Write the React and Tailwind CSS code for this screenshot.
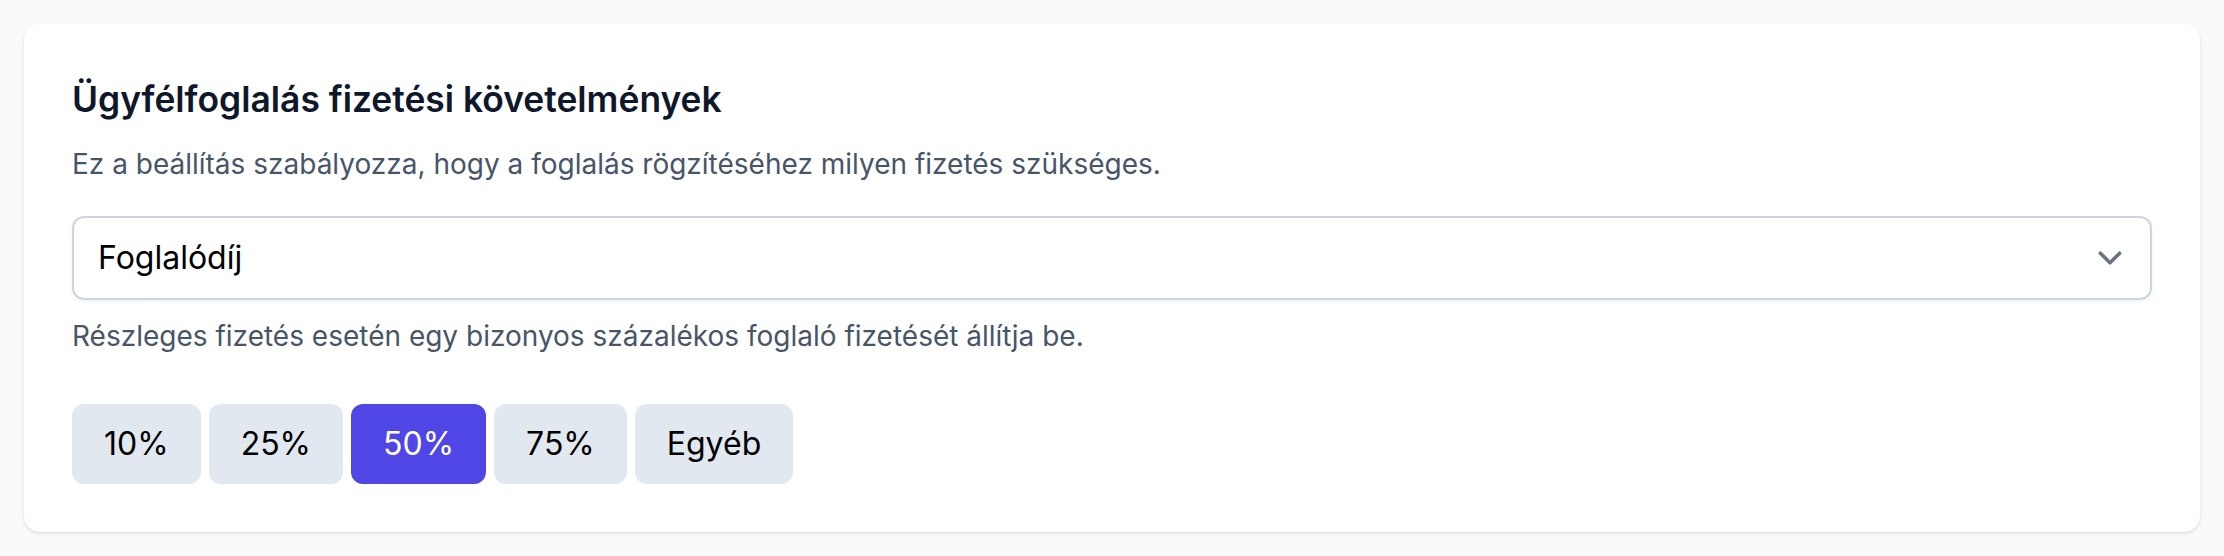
import React from "react";

function Chevron() {
  return (
    <svg className="pointer-events-none absolute right-[16px] top-1/2 -translate-y-1/2" width="48" height="48" viewBox="0 0 20 20" fill="none">
      <path d="M6 8l4 4 4-4" stroke="#6b7280" strokeWidth="1.5" strokeLinecap="round" strokeLinejoin="round" />
    </svg>
  );
}

export default function App() {
  const options = ["10%", "25%", "50%", "75%", "Egyéb"];
  return (
    <div className="min-h-[556px] w-full bg-[#f8fafc] p-[24px]" style={{ fontFamily: "Inter, 'Noto Sans', sans-serif" }}>
      <div className="rounded-[16px] bg-white p-[48px] shadow-[0_2px_4px_rgba(15,23,42,0.08),0_1px_2px_rgba(15,23,42,0.06)]">
        <h2 className="text-[35.4px] leading-[56px] font-semibold text-[#0f172a]">Ügyfélfoglalás fizetési követelmények</h2>
        <p className="mt-[16px] text-[28px] leading-[40px] text-[#475569]">
          Ez a beállítás szabályozza, hogy a foglalás rögzítéséhez milyen fizetés szükséges.
        </p>
        <div className="relative mt-[32px] h-[84px] rounded-[12px] border-2 border-[#cbd5e1] bg-white shadow-[0_2px_4px_rgba(0,0,0,0.05)] flex items-center pl-[24px]">
          <span className="text-[32px] leading-[48px] text-black">Foglalódíj</span>
          <Chevron />
        </div>
        <p className="mt-[16px] text-[28px] leading-[40px] text-[#475569]">
          Részleges fizetés esetén egy bizonyos százalékos foglaló fizetését állítja be.
        </p>
        <div className="mt-[48px] flex gap-[8px]">
          {options.map((o) => (
            <button
              key={o}
              className={
                o === "50%"
                  ? "h-[80px] rounded-[12px] bg-[#4f46e5] px-[32px] text-[32px] leading-[48px] text-white"
                  : "h-[80px] rounded-[12px] bg-[#e2e8f0] px-[32px] text-[32px] leading-[48px] text-black"
              }
            >
              {o}
            </button>
          ))}
        </div>
      </div>
    </div>
  );
}
